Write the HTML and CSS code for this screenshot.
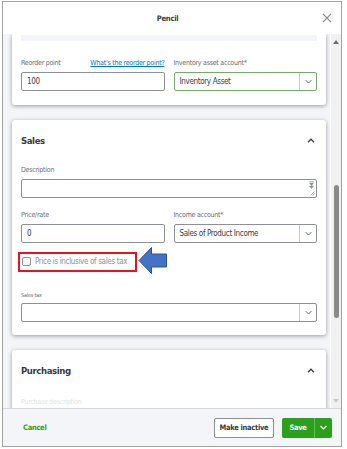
FILE: index.html
```html
<!DOCTYPE html>
<html lang="en">
<head>
<meta charset="UTF-8">
<meta name="viewport" content="width=device-width, initial-scale=1.0">
<link rel="stylesheet" href="styles.css">
</head>
<body>

<div class="dialog">
  <div class="header">
    <span></span>
    <div class="title">Pencil</div>
    <svg class="close" width="10" height="10" viewBox="0 0 10 10"><path d="M1 1L9 9M9 1L1 9" stroke="#8d9096" stroke-width="1.1" fill="none"/></svg>
  </div>

  <div class="main">
    <div class="scroll">
      <div class="card first">
        <div class="strip"></div>
        <div class="row">
          <div class="field">
            <div class="label split"><span>Reorder point</span><a class="link">What's the reorder point?</a></div>
            <div class="input">100</div>
          </div>
          <div class="field">
            <div class="label">Inventory asset account*</div>
            <div class="input select focus">
              <span class="value">Inventory Asset</span>
              <span class="caret"><svg width="7" height="5" viewBox="0 0 7 5"><path d="M0.5 1L3.5 4L6.5 1" stroke="#6b6c72" fill="none"/></svg></span>
            </div>
          </div>
        </div>
      </div>

      <div class="card">
        <div class="card-head">
          <span>Sales</span>
          <svg width="8" height="5" viewBox="0 0 8 5"><path d="M1 4.2L4 1.2L7 4.2" stroke="#393a3d" stroke-width="1.3" fill="none"/></svg>
        </div>
        <div class="label gap-head">Description</div>
        <div class="input textarea">
          <svg class="spin" width="5" height="8" viewBox="0 0 5 8"><path d="M0 0.5H5M0.5 2L4.5 2L2.5 4.5Z M0.5 5L4.5 5L2.5 7.5Z" stroke="#8d9096" stroke-width="0.6" fill="#8d9096"/></svg>
          <svg class="grip" width="5" height="5" viewBox="0 0 5 5"><path d="M0.5 4.5L4.5 0.5M2.5 4.5L4.5 2.5" stroke="#9a9a9a" stroke-width="0.7"/></svg>
        </div>
        <div class="row gap-field">
          <div class="field">
            <div class="label">Price/rate</div>
            <div class="input">0</div>
          </div>
          <div class="field">
            <div class="label">Income account*</div>
            <div class="input select">
              <span class="value">Sales of Product Income</span>
              <span class="caret"><svg width="7" height="5" viewBox="0 0 7 5"><path d="M0.5 1L3.5 4L6.5 1" stroke="#6b6c72" fill="none"/></svg></span>
            </div>
          </div>
        </div>
        <div class="check-row">
          <div class="highlight">
            <span class="box"></span>
            <span>Price is inclusive of sales tax</span>
          </div>
          <svg class="arrow" width="30" height="30" viewBox="0 0 30 30"><path d="M1 14.5L13.5 1.5V8H28.5V21H13.5V27.5Z" fill="#4472c4" stroke="#2f528f" stroke-width="1"/></svg>
        </div>
        <div class="label small">Sales tax</div>
        <div class="input select">
          <span class="value"></span>
          <span class="caret"><svg width="7" height="5" viewBox="0 0 7 5"><path d="M0.5 1L3.5 4L6.5 1" stroke="#6b6c72" fill="none"/></svg></span>
        </div>
      </div>

      <div class="card">
        <div class="card-head">
          <span class="medium">Purchasing</span>
          <svg width="8" height="5" viewBox="0 0 8 5"><path d="M1 4.2L4 1.2L7 4.2" stroke="#393a3d" stroke-width="1.3" fill="none"/></svg>
        </div>
        <div class="label faded">Purchase description</div>
      </div>
    </div>

    <div class="scrollbar">
      <span class="up"></span>
      <span class="thumb"></span>
      <span class="down"></span>
    </div>
  </div>

  <div class="footer">
    <a class="cancel">Cancel</a>
    <div class="actions">
      <button class="btn">Make inactive</button>
      <div class="save">
        <span class="save-main">Save</span>
        <span class="save-more"><svg width="7" height="5" viewBox="0 0 7 5"><path d="M0.5 1L3.5 4L6.5 1" stroke="#fff" stroke-width="1.1" fill="none"/></svg></span>
      </div>
    </div>
  </div>
</div>

</body>
</html>
```

FILE: styles.css
```css
body {
  margin: 0;
  background: #fff;
  font-family: "Liberation Sans Narrow", "DejaVu Sans Condensed", "Liberation Sans", sans-serif;
  color: #393a3d;
}
.dialog {
  margin: 1px 0 0 2px;
  width: 340px;
  height: 446px;
  border: 1px solid #a3a3a3;
  box-sizing: border-box;
  display: flex;
  flex-direction: column;
  background: #fff;
}
.header {
  height: 32px;
  flex: none;
  display: grid;
  grid-template-columns: 1fr auto 1fr;
  align-items: center;
  padding: 0 9px 0 0;
}
.title {
  font-size: 7.6px;
  letter-spacing: -0.3px;
  font-weight: bold;
  color: #393a3d;
}
.close {
  justify-self: end;
}
.main {
  height: 374px;
  flex: none;
  display: flex;
  overflow: hidden;
}
.scroll {
  flex: 1;
  background: #f4f5f8;
  padding: 0 4px 0 9px;
  overflow: hidden;
}
.scrollbar {
  width: 11px;
  flex: none;
  background: #f1f1f3;
  border-left: 1px solid #fff;
  display: flex;
  flex-direction: column;
  align-items: center;
  box-sizing: border-box;
}
.scrollbar .up {
  margin-top: 6px;
  border: 3px solid transparent;
  border-top: 0;
  border-bottom: 4px solid #6b6c72;
}
.scrollbar .thumb {
  margin-top: 141px;
  width: 5px;
  height: 133px;
  border-radius: 3px;
  background: #8a8a8a;
}
.scrollbar .down {
  margin-top: auto;
  margin-bottom: 5px;
  border: 3px solid transparent;
  border-bottom: 0;
  border-top: 4px solid #c9c9c9;
}

.card {
  background: #fff;
  border-radius: 3px;
  box-shadow: 0 1px 4px rgba(0, 0, 0, 0.38);
  padding: 13px 9px 13px;
  margin-bottom: 15px;
}
.card.first {
  padding-top: 1px;
  padding-bottom: 14px;
  border-radius: 0 0 3px 3px;
  margin-bottom: 15px;
}
.strip {
  height: 6px;
  background: #f4f5f8;
  margin-bottom: 17px;
}
.row {
  display: grid;
  grid-template-columns: 1fr 1fr;
  gap: 9px;
}
.label {
  font-size: 7px;
  letter-spacing: -0.25px;
  line-height: 10px;
  color: #6b6c72;
  margin-bottom: 4px;
  white-space: nowrap;
}
.label.split {
  display: flex;
  justify-content: space-between;
}
.link {
  color: #0077c5;
  text-decoration: underline;
}
.label.small {
  font-size: 5.5px;
  letter-spacing: -0.2px;
  margin-top: 19px;
  margin-bottom: 4px;
  line-height: 8px;
}
.label.faded {
  margin-top: 21px;
  line-height: 8px;
  color: #e3e4e7;
}
.input {
  height: 19px;
  box-sizing: border-box;
  border: 1px solid #8d9096;
  border-radius: 2px;
  font-size: 8px;
  letter-spacing: -0.35px;
  line-height: 17px;
  padding-left: 5px;
  color: #393a3d;
  white-space: nowrap;
  overflow: hidden;
}
.select {
  display: flex;
  padding-left: 0;
}
.select .value {
  flex: 1;
  padding-left: 5px;
}
.select .caret {
  width: 16px;
  border-left: 1px solid #c9cacc;
  display: flex;
  align-items: center;
  justify-content: center;
}
.focus {
  border-color: #79a86c;
}
.card-head {
  display: flex;
  justify-content: space-between;
  align-items: center;
  height: 14px;
  padding-right: 2px;
  font-size: 9.5px;
  letter-spacing: -0.4px;
  font-weight: bold;
  color: #393a3d;
}
.card-head .medium {
  font-weight: 600;
}
.gap-head {
  margin-top: 18px;
}
.textarea {
  position: relative;
}
.textarea .spin {
  position: absolute;
  right: 2px;
  top: 1px;
}
.textarea .grip {
  position: absolute;
  right: 1px;
  bottom: 1px;
}
.gap-field {
  margin-top: 12px;
}
.check-row {
  display: flex;
  align-items: center;
  margin-top: 8px;
}
.highlight {
  display: flex;
  align-items: center;
  gap: 4px;
  height: 20px;
  box-sizing: border-box;
  border: 2px solid #e8141b;
  margin-left: -3px;
  padding: 0 8px 0 2px;
  font-size: 8px;
  letter-spacing: -0.35px;
  color: #8d9096;
  white-space: nowrap;
}
.box {
  width: 9px;
  height: 9px;
  border: 1px solid #8d9096;
  border-radius: 2px;
  box-sizing: border-box;
}
.arrow {
  margin: -5px 0 -4px 1px;
}

.footer {
  flex: 1;
  border-top: 1px solid #d4d7dc;
  background: #f4f5f8;
  display: flex;
  align-items: center;
  justify-content: space-between;
  padding: 0 9px 0 20px;
}
.cancel {
  color: #2ca01c;
  font-size: 7.5px;
  letter-spacing: -0.3px;
  font-weight: bold;
}
.actions {
  display: flex;
  gap: 8px;
}
.btn {
  height: 20px;
  width: 60px;
  padding: 0;
  background: #fff;
  border: 1px solid #8d9096;
  border-radius: 2px;
  font-family: inherit;
  font-size: 7.5px;
  letter-spacing: -0.3px;
  font-weight: bold;
  color: #393a3d;
  white-space: nowrap;
}
.save {
  display: flex;
  height: 20px;
  width: 50px;
  background: #2ca01c;
  border-radius: 2px;
  color: #fff;
  font-size: 7.5px;
  letter-spacing: -0.3px;
  font-weight: bold;
}
.save-main {
  flex: 1;
  display: flex;
  align-items: center;
  justify-content: center;
}
.save-more {
  width: 17px;
  border-left: 1px solid #5cbf4e;
  display: flex;
  align-items: center;
  justify-content: center;
}
```
